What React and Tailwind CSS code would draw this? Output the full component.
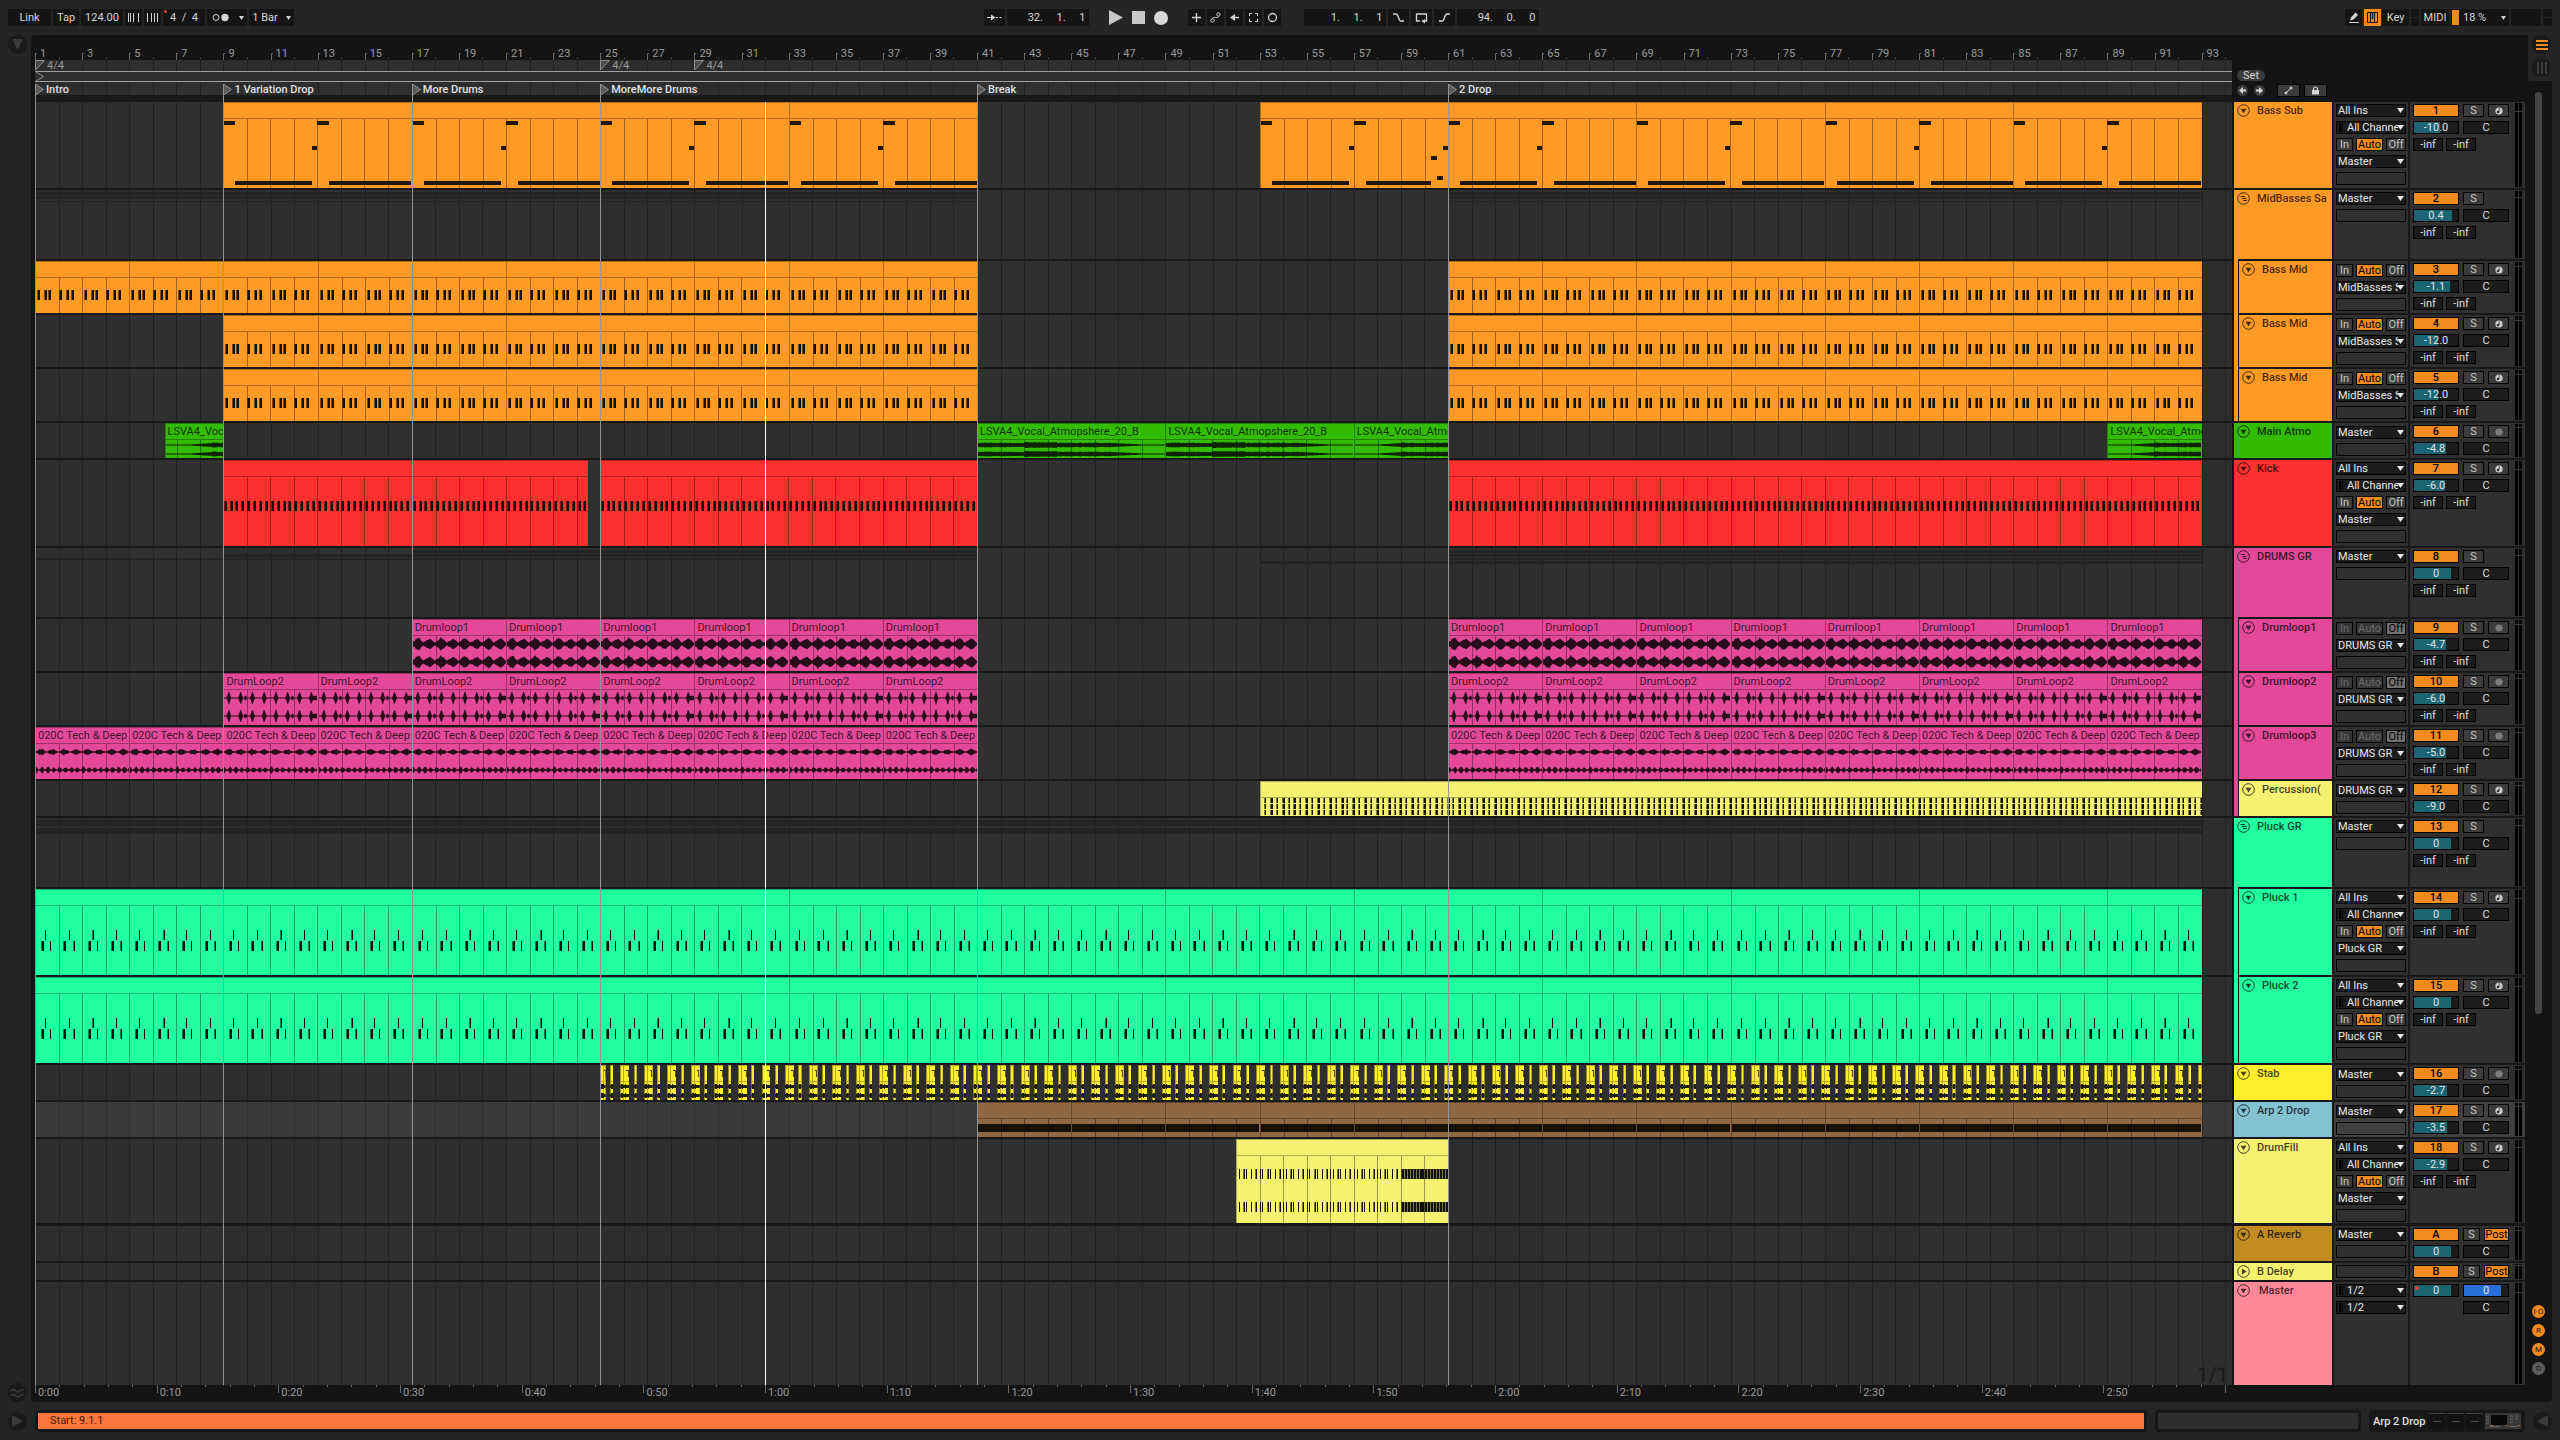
import React from "react";

/* ---------- timeline geometry ---------- */
const BARS = 93.29;
const pos = (bar) => `${((bar - 1) / BARS) * 100}%`;
const span = (bars) => `${(bars / BARS) * 100}%`;
const range = (n) => Array.from({ length: n }, (_, i) => i);
const every = (from, to, step, label) => {
  const out = [];
  for (let b = from; b < to; b += step) out.push({ s: b, e: Math.min(b + step, to), label });
  return out;
};
const rnd = (n) => {
  const v = Math.sin(n * 127.1 + 11.7) * 43758.5453;
  return v - Math.floor(v);
};

/* ---------- note patterns: t and w in bars, px = fixed pixel width ---------- */
const bassSub = ({ s, e }) => {
  const out = [
    { t: 0, w: 0.5, y: 2, h: 4 },
    { t: 4, w: 0.5, y: 2, h: 4 },
    { t: 0.5, w: 3.27, y: 62, h: 4 },
    { t: 3.77, w: 0.23, y: 27, h: 4 },
  ];
  if (s === 53)
    out.push(
      { t: 4.5, w: 2.75, y: 62, h: 4 },
      { t: 7.25, w: 0.25, y: 37, h: 4 },
      { t: 7.5, w: 0.25, y: 57, h: 4 },
      { t: 7.77, w: 0.23, y: 27, h: 4 }
    );
  else out.push({ t: 4.5, w: e - s - 4.5, y: 62, h: 4 });
  return out;
};
const perBar = (list) => ({ s, e }) => {
  const out = [];
  for (let b = 0; b < e - s; b++) list(b, s).forEach((n) => b + n.t < e - s && out.push({ ...n, t: b + n.t }));
  return out;
};
const bassMid = perBar((b) => (b % 2 ? [0.03, 0.33, 0.53] : [0.07, 0.37, 0.56]).map((t) => ({ t, px: 3, y: 12, h: 10 })));
const kick = perBar(() => [0.03, 0.28, 0.53, 0.78].map((t) => ({ t, px: 3, y: 24, h: 10 })));
const perc = perBar(() =>
  [0.17, 0.42, 0.67, 0.92].flatMap((t, i) => [0, 6, 12].map((y) => ({ t, px: i % 2 ? 3 : 2, y, h: 5 })))
);
const pluck = perBar((b) => [
  { t: 0.43, px: b % 3 === 2 ? 2 : 1, y: 24, h: 10 },
  { t: b % 2 ? 0.21 : 0.24, px: 3, y: 35, h: 10 },
  { t: b % 2 ? 0.6 : 0.63, px: b % 2 ? 2 : 1, y: 35, h: 10 },
]);
const fill = perBar((b) =>
  (b >= 7 ? range(8).map((i) => i / 8) : [0, 0.12, 0.3, 0.43, 0.64, 0.81]).flatMap((t, i) =>
    [13, 46].map((y) => ({ t, px: b >= 7 ? 3 : i % 3 === 2 ? 2 : 1, y, h: 10 }))
  )
);

/* ---------- audio wave forms ---------- */
function wavePath(kind, s, len, center) {
  const n = Math.round(len * 23.55);
  const up = [];
  const down = [];
  for (let x = 0; x <= n; x++) {
    const half = ((x / 11.775) % 1 + 1) % 1;
    const beat = Math.floor(x / 11.775);
    const jag = rnd(x);
    let a = 0.5;
    if (kind === "loop1") {
      const swell = Math.max(0, Math.sin(Math.PI * half));
      a = 1.2 + 5.8 * Math.pow(swell, 1.7) * (0.6 + 0.4 * jag) * (beat % 2 ? 0.85 : 1) + (half < 0.15 ? 0.8 : 0);
    }
    if (kind === "loop2") {
      const d = Math.abs(half - 0.5);
      a = 0.5 + (d < 0.18 ? 6.8 * (1 - d / 0.18) : 0) + (beat % 4 === 1 && half > 0.8 ? 1.8 : 0) + (beat % 8 === 7 && half > 0.7 ? 1.8 : 0);
    }
    if (kind === "loop3") {
      const low = center > 15;
      const rate = low ? half * 2 : half;
      a = 0.6 + 3.3 * Math.pow(Math.abs(Math.sin(Math.PI * (rate + (low ? 0.3 : 0)))), 2) * (0.35 + 0.65 * jag);
    }
    if (kind === "atmo") {
      const p = x / 23.55;
      const body = 1.7 + jag * 0.8;
      const ramp = p < 1 ? 0.5 : p < 2 ? 0.5 + (p - 1) * 1.4 : body;
      if (s === 41 || s === 49) a = p > 7 ? 0.5 : p > 5.8 ? 0.6 + (7 - p) * 1.1 : body + (p > 2 && p < 3.4 ? 0.6 : 0);
      else a = ramp;
    }
    up.push(`${x},${(center - a).toFixed(1)}`);
    down.unshift(`${x},${(center + a).toFixed(1)}`);
  }
  return { n, points: [...up, ...down].join(" ") };
}

function Wave({ kind, s, len, height }) {
  const centers = kind === "atmo" ? [5, 14] : [8, 26];
  const waves = centers.map((c) => wavePath(kind, s, len, c));
  return (
    <svg x="0" y="0" width="100%" height="100%" viewBox={`0 0 ${len * 23.55} ${height}`} preserveAspectRatio="none">
      {waves.map((w, i) => (
        <polygon key={i} points={w.points} fill={kind === "atmo" ? "#0c1a04" : "#1c0a14"} fillOpacity="0.95" />
      ))}
    </svg>
  );
}

/* ---------- one clip on a lane ---------- */
function Clip({ clip, color, notes, wave, bodyHeight }) {
  const len = clip.e - clip.s;
  const first = Math.ceil(clip.s) - clip.s || 1;
  const lines = [];
  for (let t = first; t < len; t++) lines.push(t);
  const pc = (t) => `${(t / len) * 100}%`;
  const list = notes ? notes(clip) : [];
  return (
    <div
      className={`absolute inset-y-0 flex flex-col overflow-hidden border-l border-black/30 ${color}`}
      style={{ left: pos(clip.s), width: span(len) }}
    >
      <div className="flex h-[17px] shrink-0 items-center overflow-hidden border-y border-black/30 pl-[2px] whitespace-nowrap text-black/75">{clip.label}</div>
      <svg className="-ml-px w-[calc(100%+1px)] flex-1" shapeRendering="crispEdges" aria-hidden="true">
        {lines.map((t) => (
          <rect key={t} x={pc(t)} width="1" height="100%" fill="#000" fillOpacity="0.36" />
        ))}
        {wave === "drone" && <rect x="0" y="5" width="100%" height="8" fill="#15110c" />}
        {wave && wave !== "drone" && (
          <g shapeRendering="auto">
            <Wave kind={wave} s={clip.s} len={len} height={bodyHeight} />
          </g>
        )}
        {list.map((n, i) =>
          n.w ? (
            <rect key={i} x={pc(n.t)} y={n.y} width={pc(n.w)} height={n.h} fill="#21160a" />
          ) : (
            <g key={i}>
              <rect x={pc(n.t)} y={n.y} width={n.px} height={n.h} fill="#000" fillOpacity="0.5" />
              <g transform={n.px > 1 ? "translate(1 0)" : undefined}>
                <rect x={pc(n.t)} y={n.y} width={Math.max(1, n.px - 1)} height={n.h} fill="#14100a" />
              </g>
            </g>
          )
        )}
      </svg>
    </div>
  );
}

/* Short chopped audio slices, two per bar */
function StabSlices() {
  const slices = range(68).flatMap((i) => [
    { s: i ? 25 + i - 0.15 : 25, w: i ? 0.38 : 0.23, big: true },
    { s: 25 + i + 0.42, w: 0.13 },
  ]);
  slices.push({ s: 92.85, w: 0.15 });
  return (
    <svg className="absolute inset-0 size-full" shapeRendering="crispEdges" aria-hidden="true">
      {slices.map((c, i) => (
        <svg key={i} x={pos(c.s)} y="0" width={span(c.w)} height="100%">
          <rect width="100%" height="100%" fill="#ffee2e" />
          <rect width="1" height="100%" fill="#9a8c12" />
          {c.big && <rect x="3" width="1" height="100%" fill="#b5a61c" />}
          <rect y="0" width="100%" height="1" fill="#b5a61c" />
          <rect y="16" width="100%" height="1" fill="#b5a61c" />
          {c.big && <rect x="66%" y="5" width="2" height="1" fill="#2a2606" />}
          {c.big && <rect x="85%" y="5" width="1" height="7" fill="#5c5410" />}
          <rect y="20" width="100%" height="3" fill="#1f1c06" />
          <rect y="29" width="100%" height="3" fill="#1f1c06" />
          <rect x="1" y="19" width="2" height="5" fill="#1f1c06" />
          <rect x="1" y="28" width="2" height="5" fill="#1f1c06" />
          {c.big && <rect x="50%" y="19" width="1" height="5" fill="#1f1c06" />}
          {c.big && <rect x="50%" y="28" width="1" height="5" fill="#1f1c06" />}
        </svg>
      ))}
    </svg>
  );
}

/* ---------- tracks ---------- */
const ORANGE = "bg-[#ff9a24]";
const PINK = "bg-[#e34998]";
const MINT = "bg-[#22ffa0]";
const LEMON = "bg-[#f5f171]";
const TALL = "h-[86px]";
const GROUP = "h-[69px]";
const MID = "h-[52px]";
const LOW = "h-[35px]";

const TRACKS = [
  { n: "1", name: "Bass Sub", color: ORANGE, h: TALL, io: "midi", out: "Master", vol: "-10.0", f: 0.58, rec: "midi", sends: true,
    clips: [...every(9, 41, 8), ...every(53, 93, 8)], notes: bassSub },
  { n: "2", name: "MidBasses Sa", color: ORANGE, h: GROUP, io: "out", out: "Master", vol: "0.4", f: 0.86, sends: true, group: true,
    ghost: [[1, 41, 2, 3], [1, 41, 6, 3], [61, 93, 2, 3], [61, 93, 6, 3], [1, 41, 11, 1], [61, 93, 11, 1]] },
  { n: "3", name: "Bass Mid", color: ORANGE, strip: ORANGE, h: MID, io: "mon", out: "MidBasses Sa", vol: "-1.1", f: 0.81, rec: "midi", sends: true,
    clips: [...every(1, 41, 4), ...every(61, 93, 4)], notes: bassMid },
  { n: "4", name: "Bass Mid", color: ORANGE, strip: ORANGE, h: MID, io: "mon", out: "MidBasses Sa", vol: "-12.0", f: 0.54, rec: "midi", sends: true,
    clips: [...every(9, 41, 4), ...every(61, 93, 4)], notes: bassMid },
  { n: "5", name: "Bass Mid", color: ORANGE, strip: ORANGE, h: MID, io: "mon", out: "MidBasses Sa", vol: "-12.0", f: 0.54, rec: "midi", sends: true,
    clips: [...every(9, 41, 4), ...every(61, 93, 4)], notes: bassMid },
  { n: "6", name: "Main Atmo", color: "bg-[#33bb00]", h: LOW, io: "out", low: true, out: "Master", vol: "-4.8", f: 0.72, rec: "audio", wave: "atmo", body: 18,
    clips: [[6.5, 9], [41, 49], [49, 57], [57, 61], [89, 93]].map(([s, e]) => ({ s, e, label: "LSVA4_Vocal_Atmopshere_20_B" })) },
  { n: "7", name: "Kick", color: "bg-[#ff3030]", h: TALL, io: "midi", out: "Master", vol: "-6.0", f: 0.7, rec: "midi", sends: true, notes: kick,
    clips: [{ s: 9, e: 17 }, { s: 17, e: 24.5 }, { s: 25, e: 41 }, { s: 61, e: 93 }] },
  { n: "8", name: "DRUMS GR", color: PINK, h: GROUP, io: "out", out: "Master", vol: "0", f: 0.83, sends: true, group: true,
    ghost: [[17, 41, 2, 3], [9, 41, 6, 3], [1, 41, 10, 2], [61, 93, 2, 3], [61, 93, 6, 3], [61, 93, 10, 2], [53, 93, 13, 3]] },
  { n: "9", name: "Drumloop1", color: PINK, strip: PINK, h: MID, io: "monOff", out: "DRUMS GR", vol: "-4.7", f: 0.72, rec: "audio", sends: true, wave: "loop1", body: 35,
    clips: [...every(17, 41, 4, "Drumloop1"), ...every(61, 93, 4, "Drumloop1")] },
  { n: "10", name: "Drumloop2", color: PINK, strip: PINK, h: MID, io: "monOff", out: "DRUMS GR", vol: "-6.0", f: 0.7, rec: "audio", sends: true, wave: "loop2", body: 35,
    clips: [...every(9, 41, 4, "DrumLoop2"), ...every(61, 93, 4, "DrumLoop2")] },
  { n: "11", name: "Drumloop3", color: PINK, strip: PINK, h: MID, io: "monOff", out: "DRUMS GR", vol: "-5.0", f: 0.72, rec: "audio", sends: true, wave: "loop3", body: 35,
    clips: [...every(1, 41, 4, "020C Tech & Deep Tops"), ...every(61, 93, 4, "020C Tech & Deep Tops")] },
  { n: "12", name: "Percussion(", color: LEMON, strip: PINK, h: LOW, io: "out", low: true, out: "DRUMS GR", vol: "-9.0", f: 0.61, rec: "midi", notes: perc,
    clips: [{ s: 53, e: 93 }] },
  { n: "13", name: "Pluck GR", color: MINT, h: GROUP, io: "out", out: "Master", vol: "0", f: 0.83, sends: true, group: true,
    ghost: [[1, 93, 2, 6], [1, 93, 10, 6]] },
  { n: "14", name: "Pluck 1", color: MINT, strip: MINT, h: TALL, io: "midi", out: "Pluck GR", vol: "0", f: 0.83, rec: "midi", sends: true, notes: pluck,
    clips: every(1, 93, 8) },
  { n: "15", name: "Pluck 2", color: MINT, strip: MINT, h: TALL, io: "midi", out: "Pluck GR", vol: "0", f: 0.83, rec: "midi", sends: true, notes: pluck,
    clips: every(1, 93, 8) },
  { n: "16", name: "Stab", color: "bg-[#ffee2e]", h: LOW, io: "out", low: true, out: "Master", vol: "-2.7", f: 0.76, rec: "audio", stab: true },
  { n: "17", name: "Arp 2 Drop", color: "bg-[#82c2d3]", clipColor: "bg-[#8f6742]", h: LOW, io: "out", low: true, out: "Master", vol: "-3.5", f: 0.76, rec: "midi", selected: true, wave: "drone",
    clips: every(41, 93, 4) },
  { n: "18", name: "DrumFill", color: LEMON, h: "h-[84px]", end: true, io: "midi", out: "Master", vol: "-2.9", f: 0.76, rec: "midi", sends: true, notes: fill,
    clips: [{ s: 52, e: 61 }] },
  { n: "A", name: "A Reverb", color: "bg-[#c38c22]", h: LOW, io: "out", out: "Master", vol: "0", f: 0.83, ret: true },
  { n: "B", name: "B Delay", color: LEMON, h: "h-[17px]", io: "blank", ret: true, folded: true },
  { n: "M", name: "Master", color: "bg-[#ff8899]", h: "h-[103px]", last: true, io: "master", master: true },
];
const gapOf = (t) => (t.last ? "" : t.end ? "mb-[3px]" : "mb-[2px]");

const LOCATORS = [[1, "Intro"], [9, "1 Variation Drop"], [17, "More Drums"], [25, "MoreMore Drums"], [41, "Break"], [61, "2 Drop"]];

/* ---------- mixer controls ---------- */
const BOX = "h-[13px] border border-black text-center leading-[11px]";

function Drop({ label, options, icon }) {
  return (
    <label className="relative block h-[13px] w-[70px]">
      <span className="sr-only">{label}</span>
      <select className={`block h-[13px] w-full appearance-none border border-black bg-[#1c1c1c] pr-[7px] leading-[11px] text-[#e6e6e6] outline-none ${icon ? "pl-[10px]" : "pl-px"}`}>
        {options.map((o) => (
          <option key={o}>{o}</option>
        ))}
      </select>
      {icon && (
        <svg className="pointer-events-none absolute top-[2px] left-[3px] h-[9px] w-[4px]" fill="#000" aria-hidden="true">
          <rect width="2" height="9" />
          <rect x="3" width="1" height="9" />
        </svg>
      )}
      <svg className="pointer-events-none absolute top-[4px] right-[2px] h-[5px] w-[7px]" fill="#e8e8e8" aria-hidden="true">
        <path d="M0 0h7L3.500 5z" />
      </svg>
    </label>
  );
}

function Monitor({ off }) {
  const dim = "bg-[#363636] text-[#6a6a6a]";
  const plain = "bg-[#3c3c3c] text-[#c4c4c4]";
  return (
    <div className="flex w-[70px] justify-between">
      <button className={`${BOX} w-[17px] ${off ? dim : plain}`}>In</button>
      <button className={`${BOX} w-[27px] ${off ? dim : "bg-[#f28b1d] text-black"}`} aria-pressed={!off}>Auto</button>
      <button className={`${BOX} w-[20px] ${off ? "bg-[#707070] text-black" : plain}`} aria-pressed={!!off}>Off</button>
    </div>
  );
}

function InOut({ t }) {
  const blank = <div className={`${BOX} w-[70px]`} />;
  const out = <Drop label={`${t.name} output`} options={[t.out]} />;
  return (
    <div className={`flex w-[74px] shrink-0 flex-col gap-[4px] overflow-hidden pl-[2px] ${t.low || t.strip && t.io !== "midi" ? "pt-[3px]" : "pt-[2px]"} ${t.selected ? "bg-[#404040]" : "bg-[#303030]"}`}>
      {t.io === "midi" && <Drop label={`${t.name} input`} options={["All Ins"]} />}
      {t.io === "midi" && <Drop label={`${t.name} input channel`} options={["All Channels"]} icon />}
      {t.io !== "out" && t.io !== "blank" && t.io !== "master" && <Monitor off={t.io === "monOff"} />}
      {t.io === "master" && <Drop label="Cue out" options={["1/2"]} icon />}
      {t.io === "master" && <Drop label="Master out" options={["1/2"]} icon />}
      {t.out && out}
      {t.io !== "master" && blank}
    </div>
  );
}

function Level({ label, value, f, blue, dot }) {
  return (
    <div className="relative h-[13px] w-[46px] border border-black bg-[#1c1c1c]">
      <div className={`h-full ${blue ? "bg-[#2770d8]" : "bg-[#1b6472]"}`} style={{ width: `${f * 100}%` }} />
      <input aria-label={label} defaultValue={value} className="absolute inset-0 w-full bg-transparent text-center leading-[11px] text-[#e2e2e2] outline-none" />
      {dot && <span className="absolute top-px left-px size-[4px] rounded-full bg-[#e04434]" />}
    </div>
  );
}

function RecIcon({ midi }) {
  return (
    <svg className="mx-auto block size-[8px]" viewBox="0 0 8 8" aria-hidden="true">
      <circle cx="4" cy="4" r="3.600" fill={midi ? "#d0d0d0" : "#7c7c7c"} />
      {midi && <circle cx="3" cy="5" r="1.300" fill="#333" />}
      {midi && <path d="M4.200 1v4" stroke="#333" strokeWidth="0.800" />}
    </svg>
  );
}

function Mixer({ t }) {
  const pan = <button className={`${BOX} w-[46px] bg-[#1c1c1c] text-[#dcdcdc]`} aria-label={`${t.name} pan`}>C</button>;
  const grey = "bg-[#3c3c3c] text-[#c4c4c4]";
  return (
    <div className={`flex w-[115px] shrink-0 justify-between overflow-hidden pr-[3px] pl-[3px] ${t.selected ? "bg-[#404040]" : "bg-[#303030]"}`}>
      <div className="flex w-[96px] flex-col gap-[4px] pt-[2px]">
        {t.master ? (
          <>
            <div className="flex justify-between">
              <Level label="Master volume" value="0" f={0.83} dot />
              <Level label="Cue volume" value="0" f={0.83} blue />
            </div>
            <div className="flex justify-end">{pan}</div>
          </>
        ) : (
          <>
            <div className="flex gap-[4px]">
              <button className={`${BOX} w-[46px] bg-[#f28b1d] font-medium text-black`} aria-pressed="true">{t.n}</button>
              <div className="flex w-[46px] justify-between">
                <button className={`${BOX} ${t.ret ? "w-[17px]" : "w-[21px]"} ${grey}`} aria-label={`Solo ${t.name}`}>S</button>
                {t.ret && <button className={`${BOX} w-[25px] bg-[#f28b1d] text-black`}>Post</button>}
                {t.rec && (
                  <button className={`${BOX} w-[21px] ${grey}`} aria-label={`Arm ${t.name}`}>
                    <RecIcon midi={t.rec === "midi"} />
                  </button>
                )}
              </div>
            </div>
            {!t.folded && (
              <div className="flex gap-[4px]">
                <Level label={`${t.name} volume`} value={t.vol} f={t.f} />
                {pan}
              </div>
            )}
            {t.sends && (
              <div className="flex gap-[3px]">
                <button className={`${BOX} w-[30px] bg-[#1c1c1c] text-[#dcdcdc]`} aria-label="Send A">-inf</button>
                <button className={`${BOX} w-[30px] bg-[#1c1c1c] text-[#dcdcdc]`} aria-label="Send B">-inf</button>
              </div>
            )}
          </>
        )}
      </div>
      <div className="relative flex gap-px py-px">
        <div className="w-[3px] bg-black" />
        <div className="w-[3px] bg-black" />
        <div className="absolute inset-x-0 top-[10%] h-px bg-[#3a3a3a]" />
      </div>
    </div>
  );
}

function FoldIcon({ t }) {
  return (
    <svg className="size-[13px] shrink-0" viewBox="0 0 13 13" fill="none" stroke="#000" strokeOpacity="0.72" strokeWidth="1" aria-hidden="true">
      <circle cx="6.500" cy="6.500" r="5.800" />
      {t.group ? (
        <path d="M3.500 4.500H8M5 6.500h4.500M6 8.500h4" />
      ) : t.folded ? (
        <path d="M5 3.500L9.500 6.500L5 9.500z" fill="#000" fillOpacity="0.72" stroke="none" />
      ) : (
        <path d="M3.500 4.800h6L6.500 9.300z" fill="#000" fillOpacity="0.72" stroke="none" />
      )}
    </svg>
  );
}

function TrackHeader({ t }) {
  return (
    <div className={`flex gap-[2px] ${t.h} ${gapOf(t)}`}>
      <div className="flex w-[98px] shrink-0">
        {t.strip && <div className={`-mt-[2px] w-[4px] shrink-0 ${t.strip}`} />}
        <div className={`flex min-w-0 flex-1 items-start overflow-hidden pt-[2px] pl-[3px] ${t.color} ${t.strip ? "ml-px" : ""}`}>
          <button className={`flex h-[13px] items-center leading-[13px] font-medium whitespace-nowrap text-black/75 ${t.master ? "gap-[9px]" : "gap-[7px]"}`}>
            <FoldIcon t={t} />
            {t.name}
          </button>
        </div>
      </div>
      <InOut t={t} />
      <Mixer t={t} />
    </div>
  );
}

/* ---------- arrangement ---------- */
const shaded = (bar) => (bar < 25 ? Math.floor((bar - 1) / 4) % 2 : bar < 29 ? 0 : Math.floor((bar - 29) / 4) % 2);

function BarGrid() {
  return (
    <svg className="absolute inset-0 size-full bg-[#2d2d2d]" shapeRendering="crispEdges" aria-hidden="true">
      {range(93).map((i) => shaded(i + 1) === 1 && <rect key={i} x={pos(i + 1)} width={span(1)} height="100%" fill="#303030" />)}
      {range(94).map((i) => (
        <rect key={i} x={pos(i + 1)} width="1" height="100%" fill="#212121" />
      ))}
    </svg>
  );
}

function Lane({ t }) {
  return (
    <div className={`relative ${t.h} ${t.selected ? "bg-white/6" : ""}`}>
      {t.ghost && (
        <svg className="absolute inset-0 size-full" shapeRendering="crispEdges" aria-hidden="true">
          {t.ghost.map(([s, e, y, h], i) => (
            <rect key={i} x={pos(s)} y={y} width={span(e - s)} height={h} fill="#222" fillOpacity="0.8" />
          ))}
        </svg>
      )}
      {t.stab && <StabSlices />}
      {t.clips?.map((c) => (
        <Clip key={c.s} clip={c} color={t.clipColor || t.color} notes={t.notes} wave={t.wave} bodyHeight={t.body} />
      ))}
    </div>
  );
}

function Lanes() {
  return (
    <div className="relative">
      <BarGrid />
      {TRACKS.map((t) => (
        <React.Fragment key={t.n}>
          <Lane t={t} />
          {!t.last && <div className={`relative bg-[#181818] ${t.end ? "h-[3px]" : "h-[2px]"}`} />}
        </React.Fragment>
      ))}
      <svg className="pointer-events-none absolute inset-0 size-full" shapeRendering="crispEdges" aria-hidden="true">
        {LOCATORS.map(([b]) => (
          <rect key={b} x={pos(b)} width="1" height="100%" fill="#929292" />
        ))}
        <rect x={pos(32)} width="1" height="100%" fill="#fff" />
      </svg>
      <span className="absolute right-[4px] bottom-px text-xl leading-[18px] text-[#191919]">1/1</span>
    </div>
  );
}

function Ruler() {
  return (
    <div>
      <div className="relative h-[25px] overflow-hidden text-[#9a9a9a]">
        <svg className="absolute inset-0 size-full" shapeRendering="crispEdges" fill="#6a6a6a" aria-hidden="true">
          {range(94).map((i) =>
            i % 2 ? (
              <rect key={i} x={pos(i + 1)} y="23" width="1" height="1" />
            ) : (
              <g key={i}>
                <rect x={pos(i + 1)} y="18" width="1" height="7" />
                <rect x={pos(i + 1)} y="18" width="2" height="1" />
              </g>
            )
          )}
        </svg>
        {range(47).map((i) => (
          <span key={i} className="absolute top-[12px] pl-[5px] leading-[13px]" style={{ left: pos(2 * i + 1) }}>
            {2 * i + 1}
          </span>
        ))}
      </div>
      <div className="relative text-[#9a9a9a]">
        <BarGrid />
        <div className="relative h-[11px]">
          {[1, 25, 29].map((b) => (
            <span key={b} className="absolute top-0 flex items-center gap-[2px] leading-[11px]" style={{ left: pos(b) }}>
              <svg className="h-[11px] w-[10px]" aria-hidden="true">
                <path d="M0.500 0.500h9L0.500 10z" fill="#4a4a4a" stroke="#8f8f8f" />
              </svg>
              4/4
            </span>
          ))}
        </div>
        <div className="relative flex h-[11px] items-center border-y border-[#a0a0a0] bg-[#303030]">
          <svg className="h-[9px] w-[10px]" aria-hidden="true">
            <path d="M1 0L8.500 4.500L1 9" fill="none" stroke="#8f8f8f" />
          </svg>
        </div>
        <div className="relative h-[13px] text-[#e0e0e0]">
          {LOCATORS.map(([b, name]) => (
            <button key={b} className="absolute top-[2px] flex h-[11px] items-center gap-[2px] leading-[11px] font-medium whitespace-nowrap" style={{ left: pos(b) }}>
              <svg className="h-[11px] w-[9px]" aria-hidden="true">
                <path d="M0.500 0L8.500 5.500L0.500 11z" fill="#5a5a5a" stroke="#929292" />
              </svg>
              {name}
            </button>
          ))}
        </div>
      </div>
      <div className="relative h-[7px] bg-[#181818]">
        <svg className="absolute inset-0 size-full" shapeRendering="crispEdges" aria-hidden="true">
          {LOCATORS.map(([b]) => (
            <rect key={b} x={pos(b)} width="1" height="100%" fill="#929292" />
          ))}
        </svg>
      </div>
    </div>
  );
}

const SEC = 31 / 60;
const clock = (s) => `${Math.floor(s / 60)}:${String(s % 60).padStart(2, "0")}`;

function TimeRuler() {
  return (
    <div className="relative h-[17px] text-[#9a9a9a]">
      <svg className="absolute inset-0 size-full" shapeRendering="crispEdges" fill="#6a6a6a" aria-hidden="true">
        {range(91).map((i) => (
          <rect key={i} x={pos(1 + i * 2 * SEC)} width="1" height={i % 5 ? 2 : 8} />
        ))}
      </svg>
      {range(18).map((i) => (
        <span key={i} className="absolute top-px pl-[3px] leading-[13px]" style={{ left: pos(1 + i * 10 * SEC) }}>
          {clock(i * 10)}
        </span>
      ))}
    </div>
  );
}

/* ---------- toolbar ---------- */
const CELL = "flex h-[17px] items-center justify-center bg-[#151515] text-[#d4d4d4] whitespace-pre";
const Icon = ({ children, w = 13, className = "" }) => (
  <svg className={className} width={w} height="13" viewBox={`0 0 ${w} 13`} fill="none" stroke="currentColor" aria-hidden="true">
    {children}
  </svg>
);
const Caret = () => (
  <svg width="5" height="4" fill="currentColor" aria-hidden="true">
    <path d="M0 0h5L2.500 4z" />
  </svg>
);
const Field = ({ label, value, w }) => (
  <input aria-label={label} defaultValue={value} className={`h-[17px] bg-[#151515] pr-[3px] text-right text-[#d4d4d4] outline-none ${w}`} />
);

function Toolbar() {
  return (
    <header className="grid grid-cols-[1fr_auto_1fr] px-[8px] pt-[9px] pb-[9px]">
      <div className="flex gap-[2px]">
        <button className={`${CELL} w-[43px]`}>Link</button>
        <button className={`${CELL} w-[26px]`}>Tap</button>
        <input aria-label="Tempo" defaultValue="124.00" className="h-[17px] w-[42px] bg-[#151515] text-center text-[#d4d4d4] outline-none" />
        <button className={`${CELL} w-[17px]`} aria-label="Nudge down">
          <Icon><path d="M1.500 2v9M3.500 2v9M6.500 2v9M11.500 2v9" /></Icon>
        </button>
        <button className={`${CELL} w-[17px]`} aria-label="Nudge up">
          <Icon><path d="M1.500 2v9M5.500 2v9M8.500 2v9M11.500 2v9" /></Icon>
        </button>
        <button className={`${CELL} relative w-[42px]`}>
          4  /  4
          <span className="absolute top-px left-px size-[3px] rounded-full bg-[#e04434]" />
        </button>
        <button className={`${CELL} w-[40px] gap-[9px] pl-[2px]`} aria-label="Metronome">
          <Icon w={18}>
            <circle cx="4" cy="6.500" r="3" />
            <circle cx="13" cy="6.500" r="3.700" fill="currentColor" stroke="none" />
          </Icon>
          <Caret />
        </button>
        <button className={`${CELL} w-[45px] gap-[8px]`}>1 Bar<Caret /></button>
      </div>
      <div className="flex gap-[2px] pr-[38px]">
        <button className={`${CELL} w-[21px]`} aria-label="Follow">
          <Icon w={16}><path d="M1 6.500h8M10 6.500h2M13.500 6.500h2" /><path d="M5 3.500L9.500 6.500L5 9.500z" fill="currentColor" stroke="none" /></Icon>
        </button>
        <Field label="Position" value="32.     1.     1" w="w-[82px]" />
        <div className="flex items-center gap-[9px] px-[18px] text-[#c8c8c8]">
          <button aria-label="Play"><svg className="block" width="14" height="15" fill="currentColor"><path d="M0 0L14 7.500L0 15z" /></svg></button>
          <button aria-label="Stop" className="size-[13px] bg-current" />
          <button aria-label="Record" className="size-[14px] rounded-full bg-[#d8d8d8]" />
        </div>
        <button className={`${CELL} w-[17px]`} aria-label="Overdub"><Icon><path d="M6.500 2v9M2 6.500h9" strokeWidth="1.400" /></Icon></button>
        <button className={`${CELL} w-[17px]`} aria-label="Automation arm"><Icon><circle cx="3.500" cy="9.500" r="1.700" /><circle cx="9.500" cy="3.500" r="1.700" /><path d="M3.500 7.500C3.500 5 9.500 8 9.500 5.500" /></Icon></button>
        <button className={`${CELL} w-[17px] text-[#666]`} aria-label="Re-enable automation"><Icon><path d="M11 6.500H5" strokeWidth="1.500" /><path d="M2 6.500L7 3v7z" fill="currentColor" stroke="none" /></Icon></button>
        <button className={`${CELL} w-[17px] text-[#555]`} aria-label="Capture"><Icon><path d="M2.500 5V2.500H5M8 2.500h2.500V5M10.500 8v2.500H8M5 10.500H2.500V8" /></Icon></button>
        <button className={`${CELL} w-[17px]`} aria-label="Session record"><Icon><circle cx="6.500" cy="6.500" r="4" strokeWidth="1.300" /></Icon></button>
        <div className="w-[19px]" />
        <Field label="Loop start" value="1.     1.     1" w="w-[82px]" />
        <button className={`${CELL} w-[21px]`} aria-label="Punch in"><Icon><path d="M1 3h3c3 0 2 7 5 7h3" strokeWidth="1.300" /></Icon></button>
        <button className={`${CELL} w-[21px]`} aria-label="Loop"><Icon><path d="M5 10H1.500V3h10v7H7.500" strokeWidth="1.300" /><path d="M10 8L6.500 10L10 12.500z" fill="currentColor" stroke="none" /></Icon></button>
        <button className={`${CELL} w-[21px]`} aria-label="Punch out"><Icon><path d="M1 10h3c3 0 2-7 5-7h3" strokeWidth="1.300" /></Icon></button>
        <Field label="Loop length" value="94.     0.     0" w="w-[82px]" />
      </div>
      <div className="flex justify-end gap-[2px]">
        <button className={`${CELL} w-[17px]`} aria-label="Draw mode"><Icon><path d="M2 11.500h10" /><path d="M3 9.500L4 6.500L8.500 1.500L11 4L6.500 8.500z" fill="currentColor" stroke="none" /></Icon></button>
        <button className="flex h-[17px] w-[17px] items-center justify-center bg-[#f28b1d] text-[#151515]" aria-label="Computer keyboard"><Icon><path d="M1.500 1.500h10v10h-10zM4.500 8v3M8.500 8v3" /><path d="M4.500 2v6M6.500 2v6M8.500 2v6" strokeWidth="1.200" /></Icon></button>
        <button className={`${CELL} -ml-px w-[27px]`}>Key</button>
        <div className="flex w-[8px] flex-col gap-px"><i className="flex-1 bg-[#151515]" /><i className="flex-1 bg-[#151515]" /></div>
        <button className={`${CELL} w-[28px]`}>MIDI</button>
        <button className={`${CELL} w-[58px] justify-start pl-px`}>
          <i className="mr-[4px] h-[15px] w-[7px] bg-[#f28b1d]" />18 %<span className="ml-auto pr-[3px]"><Caret /></span>
        </button>
        <div className="h-[17px] w-[30px] bg-[#151515]" />
        <div className="flex w-[9px] flex-col gap-px"><i className="flex-1 bg-[#151515]" /><i className="flex-1 bg-[#151515]" /></div>
      </div>
    </header>
  );
}

const ROUND = "flex size-[19px] items-center justify-center rounded-full bg-[#1a1a1a]";

function SetBar() {
  const sq = "flex h-[13px] w-[23px] items-center justify-center border border-black bg-[#3c3c3c] text-[#d8d8d8]";
  const arrow = "flex size-[11px] items-center justify-center rounded-full bg-[#3c3c3c] text-[#d8d8d8]";
  return (
    <div className="flex h-[67px] flex-col justify-end gap-[3px] pb-[5px] pl-[3px]">
      <button className="h-[11px] w-[28px] rounded-full bg-[#3c3c3c] leading-[11px] text-[#d8d8d8]">Set</button>
      <div className="flex items-center">
        <button className={arrow} aria-label="Previous locator"><svg width="7" height="7" fill="currentColor"><path d="M0 3.500L4 0v2.500h3v2H4V7z" /></svg></button>
        <button className={`${arrow} ml-[6px]`} aria-label="Next locator"><svg width="7" height="7" fill="currentColor"><path d="M7 3.500L3 0v2.500H0v2h3V7z" /></svg></button>
        <button className={`${sq} ml-[12px]`} aria-label="Automation mode"><svg width="9" height="9" fill="currentColor" stroke="currentColor"><path d="M2 7L7 2" /><circle cx="2" cy="7" r="1" /><circle cx="7" cy="2" r="1" /></svg></button>
        <button className={`${sq} ml-[4px]`} aria-label="Lock envelopes"><svg width="9" height="9" fill="none" stroke="currentColor"><rect x="1" y="4" width="7" height="4.500" fill="currentColor" stroke="none" /><path d="M2.500 4V3a2 2 0 0 1 4 0v1" strokeWidth="1.200" /></svg></button>
      </div>
    </div>
  );
}

function SideRail() {
  const dots = [["I·O", true], ["R", true], ["M", true], ["D", false]];
  return (
    <div className="flex w-[27px] shrink-0 flex-col">
      <div className="ml-[3px] flex h-[46px] flex-col items-end gap-[4px] rounded-bl-[3px] bg-[#252525] pr-px">
        <button className={ROUND} aria-label="Arrangement view"><svg width="12" height="12" fill="#f28b1d"><path d="M0 1h12v2H0zM0 5h12v2H0zM0 9h12v2H0z" /></svg></button>
        <button className={ROUND} aria-label="Session view"><svg width="12" height="12" fill="#3c3c3c"><path d="M1 0h2v12H1zM5 0h2v12H5zM9 0h2v12H9z" /></svg></button>
      </div>
      <div className="flex-1 pt-[11px] pl-[10px]">
        <div className="h-[76%] w-[7px] rounded-full bg-[#454545]" />
      </div>
      <div className="flex flex-col items-center gap-[6px] pb-[27px]">
        {dots.map(([d, on]) => (
          <button key={d} className={`size-[13px] rounded-full text-center text-[8px] leading-[13px] text-[#151515] ${on ? "bg-[#f28b1d]" : "bg-[#5c5c5c]"}`}>{d}</button>
        ))}
      </div>
    </div>
  );
}

function StatusBar() {
  return (
    <footer className="flex items-center gap-[8px] px-[8px] pt-[8px] pb-[8px]">
      <button className={ROUND} aria-label="Show info"><svg width="11" height="12" fill="#3a3a3a"><path d="M0 0L11 6L0 12z" /></svg></button>
      <div className="h-[22px] flex-1 rounded-[4px] bg-[#181818] p-[3px]">
        <div className="h-full bg-[#ff763c] pl-[12px] leading-[16px] text-black/80">Start: 9.1.1</div>
      </div>
      <div className="h-[22px] w-[206px] rounded-[4px] bg-[#181818] p-[3px]"><div className="h-full bg-[#2f2f2f]" /></div>
      <div className="flex h-[22px] w-[156px] items-center gap-[3px] rounded-[4px] bg-[#181818] pl-[4px] font-medium text-[#e0e0e0]">
        Arp 2 Drop
        <svg width="94" height="16" aria-hidden="true">
          {[0, 19, 38].map((x) => (
            <g key={x}>
              <rect x={x} width="17" height="16" fill="#131313" />
              <rect x={x} width="17" height="1" fill="#3c3c3c" />
              <rect x={x + 5} y="8" width="8" height="1" fill="#4a4a4a" />
            </g>
          ))}
          <rect x="57" width="36" height="16" fill="#383838" />
          <rect x="63" y="2" width="16" height="10" fill="#080808" />
          <path d="M58 4h3M58 7h3M58 10h3M82 3h3M87 3h3M82 6h3M87 6h3M82 9h3M62 13.500h10M81 13.500h9" stroke="#666" fill="none" />
          <path d="M62 12.500h3M78 12.500h2M90 12.500h2" stroke="#b06a20" />
        </svg>
      </div>
      <button className={ROUND} aria-label="Show devices"><svg width="11" height="12" fill="#3a3a3a"><path d="M11 0L0 6l11 6z" /></svg></button>
    </footer>
  );
}

export default function App() {
  return (
    <div className="flex min-h-screen flex-col bg-[#252525] font-['Roboto','Liberation_Sans',sans-serif] text-[11px] leading-[13px]">
      <Toolbar />
      <main className="flex pr-[8px]">
        <div className="flex w-[31px] shrink-0 flex-col justify-between pl-[8px]">
          <button className={ROUND} aria-label="Show browser"><svg width="11" height="11" fill="#3a3a3a"><path d="M0 0h11L5.500 11z" /></svg></button>
          <button className={ROUND} aria-label="Groove pool"><svg width="13" height="10" fill="none" stroke="#3a3a3a" strokeWidth="1.600"><path d="M0 3c3-4 5 2 7 1s3-3 6-2M0 8c3-4 5 2 7 1s3-3 6-2" /></svg></button>
        </div>
        <div className="flex min-w-0 flex-1 rounded-[4px] bg-[#141414]">
          <div className="min-w-0 flex-1 pl-[4px]">
            <Ruler />
            <Lanes />
            <TimeRuler />
          </div>
          <div className="w-[293px] shrink-0 pl-[2px]">
            <SetBar />
            <div className="bg-[#181818]">
              {TRACKS.map((t) => (
                <TrackHeader key={t.n} t={t} />
              ))}
            </div>
          </div>
          <SideRail />
        </div>
      </main>
      <StatusBar />
    </div>
  );
}
